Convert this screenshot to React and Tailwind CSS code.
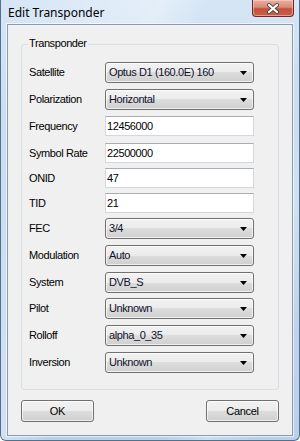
import React from "react";

const font = { fontFamily: '"Liberation Sans", Arial, sans-serif' };

const rows = [
  { label: "Satellite", type: "combo", value: "Optus D1 (160.0E) 160", h: "h-[27px]" },
  { label: "Polarization", type: "combo", value: "Horizontal", h: "h-[27px]" },
  { label: "Frequency", type: "text", value: "12456000", h: "h-[27px]" },
  { label: "Symbol Rate", type: "text", value: "22500000", h: "h-[25px]" },
  { label: "ONID", type: "text", value: "47", h: "h-[25px]" },
  { label: "TID", type: "text", value: "21", h: "h-[25px]" },
  { label: "FEC", type: "combo", value: "3/4", h: "h-[27px]" },
  { label: "Modulation", type: "combo", value: "Auto", h: "h-[27px]" },
  { label: "System", type: "combo", value: "DVB_S", h: "h-[26px]" },
  { label: "Pilot", type: "combo", value: "Unknown", h: "h-[27px]" },
  { label: "Rolloff", type: "combo", value: "alpha_0_35", h: "h-[27px]" },
  { label: "Inversion", type: "combo", value: "Unknown", h: "h-[21px]" },
];

function Combo({ value }) {
  return (
    <div className="w-[149px] h-[21px] rounded-[3px] border border-[#707070] bg-[linear-gradient(to_bottom,#f2f2f2_0%,#ebebeb_50%,#dddddd_50%,#cfcfcf_100%)] shadow-[inset_0_0_0_1px_rgba(255,255,255,0.7)] flex items-center pl-[3px] pr-[6px] text-[11px] tracking-[-0.4px] text-[#10102a]">
      <span className="flex-1 leading-none whitespace-nowrap">{value}</span>
      <svg width="7" height="4" viewBox="0 0 7 4" className="shrink-0">
        <path d="M0 0 H7 L3.5 4 Z" fill="#000" />
      </svg>
    </div>
  );
}

function TextBox({ value }) {
  return (
    <div className="w-[149px] h-[20px] bg-white border border-[#d3d8e0] border-t-[#abadb3] flex items-center pl-[1px] text-[11px] tracking-[-0.4px] text-black">
      <span className="leading-none">{value}</span>
    </div>
  );
}

function Button({ children }) {
  return (
    <div className="w-[73px] h-[22px] rounded-[3px] border border-[#707070] bg-[linear-gradient(to_bottom,#f2f2f2_0%,#ebebeb_50%,#dddddd_50%,#cfcfcf_100%)] shadow-[inset_0_0_0_1px_rgba(255,255,255,0.7)] flex items-center justify-center text-[11px] tracking-[-0.3px] text-black">
      {children}
    </div>
  );
}

export default function App() {
  return (
    <div style={font} className="relative w-[300px] h-[441px] overflow-hidden border-l border-r border-b border-[#55708c] rounded-b-[6px] bg-[linear-gradient(to_bottom,#d6e6f6_0%,#c4d9ef_30%,#b9d1ea_100%)]">
      {/* glass streaks */}
      <div className="absolute inset-0 pointer-events-none bg-[linear-gradient(110deg,rgba(255,255,255,0)_0%,rgba(255,255,255,0.35)_35%,rgba(255,255,255,0)_45%,rgba(255,255,255,0)_70%,rgba(255,255,255,0.25)_80%,rgba(255,255,255,0)_90%)]" />
      {/* title bar */}
      <div className="relative h-[24px] flex items-center pl-[7px] pt-[1px]">
        <span
          className="text-[12px] text-black leading-none"
          style={{ fontFamily: '"Noto Sans", "Open Sans", sans-serif' }}
        >
          Edit Transponder
        </span>
      </div>
      {/* close button */}
      <div className="absolute top-0 left-[251px] w-[42px] h-[17px] rounded-b-[4px] border border-t-0 border-[#6e2a22] bg-[linear-gradient(to_bottom,#e8b0a2_0%,#d98a77_45%,#c6503a_55%,#c9604a_100%)] shadow-[inset_0_0_0_1px_rgba(255,220,210,0.5)] flex items-center justify-center">
        <svg width="14" height="11" viewBox="0 0 14 11">
          <path d="M3 2 L11 9 M11 2 L3 9" stroke="#4a4a4a" strokeWidth="4" strokeLinecap="round" />
          <path d="M3 2 L11 9 M11 2 L3 9" stroke="#ffffff" strokeWidth="2.2" strokeLinecap="round" />
        </svg>
      </div>
      {/* client area */}
      <div className="relative mx-[6px] h-[412px] border border-[#8a9bb0] bg-[#f0f0f0] shadow-[0_0_0_1px_rgba(255,255,255,0.6)] px-[13px] pt-[19px]">
        <div className="relative h-[346px] rounded-[3px] border border-[#d5dfe5] pt-[17px] pl-[7px]">
          <span className="absolute -top-[7px] left-[6px] px-[1px] bg-[#f0f0f0] text-[11px] tracking-[-0.4px] leading-none text-black">
            Transponder
          </span>
          <div className="flex flex-col">
            {rows.map((r) => (
              <div key={r.label} className={`${r.h} flex items-start`}>
                <div className="w-[76px] h-[21px] flex items-center text-[11px] tracking-[-0.4px] text-black leading-none">
                  {r.label}
                </div>
                {r.type === "combo" ? <Combo value={r.value} /> : <TextBox value={r.value} />}
              </div>
            ))}
          </div>
        </div>
        <div className="mt-[10px] flex justify-between">
          <Button>OK</Button>
          <Button>Cancel</Button>
        </div>
      </div>
    </div>
  );
}
